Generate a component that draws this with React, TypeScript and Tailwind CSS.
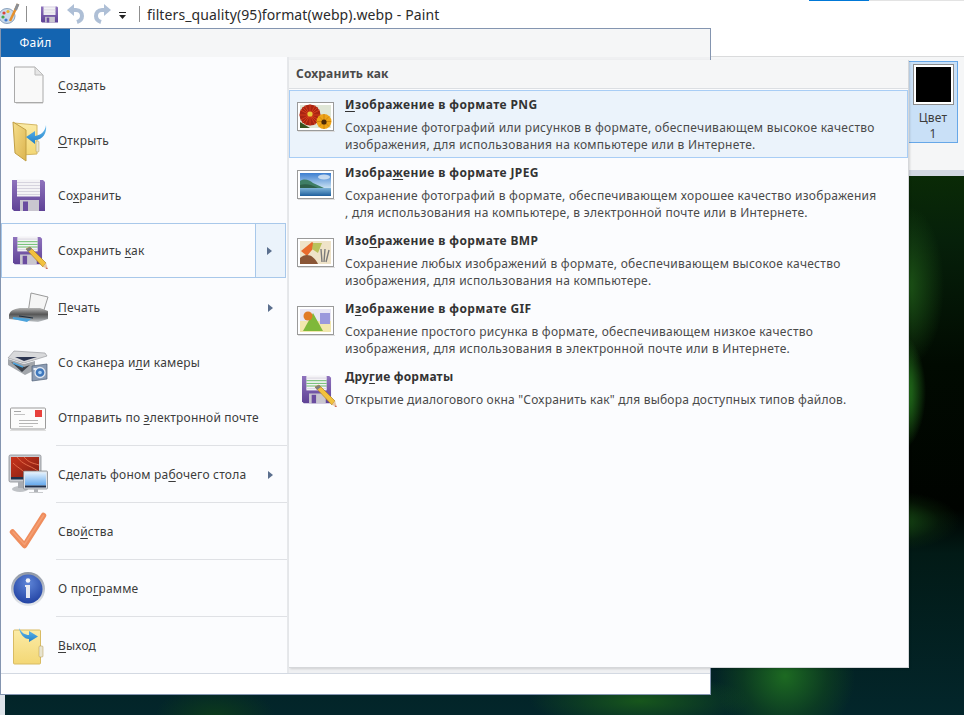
import type { ReactNode } from "react"

const Svg = ({ children, w = 48, h = 48 }: { children: ReactNode; w?: number; h?: number }) => (
  <svg width={w} height={h} viewBox={`0 0 ${w} ${h}`} className="shrink-0">
    {children}
  </svg>
)

const Defs = () => (
  <svg width="0" height="0" className="absolute">
    <defs>
      <linearGradient id="purple" x1="0" y1="0" x2="0" y2="1">
        <stop offset="0" stopColor="#8f73bd" />
        <stop offset="1" stopColor="#5f4296" />
      </linearGradient>
      <linearGradient id="yellow" x1="0" y1="0" x2="0" y2="1">
        <stop offset="0" stopColor="#fbeba6" />
        <stop offset="1" stopColor="#f3d775" />
      </linearGradient>
      <linearGradient id="door" x1="0" y1="0" x2="1" y2="1">
        <stop offset="0" stopColor="#f6df8c" />
        <stop offset="1" stopColor="#dcb44f" />
      </linearGradient>
      <linearGradient id="blueArrow" x1="0" y1="0" x2="0" y2="1">
        <stop offset="0" stopColor="#6cc0f0" />
        <stop offset="1" stopColor="#1f7fc9" />
      </linearGradient>
      <linearGradient id="dark" x1="0" y1="0" x2="0" y2="1">
        <stop offset="0" stopColor="#b4b4b4" />
        <stop offset="0.45" stopColor="#565656" />
        <stop offset="0.7" stopColor="#7d8082" />
        <stop offset="1" stopColor="#c4c8cc" />
      </linearGradient>
      <linearGradient id="red" x1="0" y1="0" x2="1" y2="1">
        <stop offset="0" stopColor="#c9341c" />
        <stop offset="1" stopColor="#7c1c10" />
      </linearGradient>
      <linearGradient id="sky" x1="0" y1="0" x2="0" y2="1">
        <stop offset="0" stopColor="#e2f1fd" />
        <stop offset="1" stopColor="#63a8ec" />
      </linearGradient>
      <linearGradient id="photoSky" x1="0" y1="0" x2="0" y2="1">
        <stop offset="0" stopColor="#3d7fd0" />
        <stop offset="1" stopColor="#c8e0f2" />
      </linearGradient>
      <linearGradient id="water" x1="0" y1="0" x2="0" y2="1">
        <stop offset="0" stopColor="#7fb4d8" />
        <stop offset="1" stopColor="#1f5f9c" />
      </linearGradient>
      <radialGradient id="infoBlue" cx="0.5" cy="0.3" r="0.8">
        <stop offset="0" stopColor="#5f86d8" />
        <stop offset="1" stopColor="#1a3a9c" />
      </radialGradient>
      <linearGradient id="silver" x1="0" y1="0" x2="0" y2="1">
        <stop offset="0" stopColor="#8d95a3" />
        <stop offset="1" stopColor="#e8ebef" />
      </linearGradient>
    </defs>
  </svg>
)

const FloppyShape = ({ green }: { green?: boolean }) => (
  <>
    <path d="M0 1 H31 L33 3 V32 H2 L0 30 Z" fill="url(#purple)" />
    <rect x="5" y="0.5" width="23" height="17" fill="#f4f3f6" />
    {[3, 6, 9, 12, 15].map((y) => (
      <rect key={y} x="5" y={y} width="23" height="1" fill={green && y > 3 && y < 13 ? "#5cb85c" : "#d6d3de"} />
    ))}
    <rect x="8" y="21" width="19" height="11" fill="#c9c6cf" />
    <rect x="11" y="22.5" width="5" height="9.5" fill="#6a4ca0" />
  </>
)

const Pencil = () => (
  <>
    <path d="M0 0 L4 -2 L20 14 L17 18 Z" fill="#f2c13d" stroke="#b58420" strokeWidth="0.7" />
    <path d="M0 0 L4 -2 L6 0 L2 3 Z" fill="#7f7f7f" />
    <path d="M17 18 L20 14 L22 20 Z" fill="#e8c8a8" />
    <path d="M20.5 18.5 L22 20 L19.5 19.6 Z" fill="#c0392b" />
  </>
)

const DocIcon = () => (
  <Svg>
    <path d="M9.5 5 H30 L38 13 V40.5 H9.5 Z" fill="#f9f9f9" stroke="#aaaaaa" />
    <path d="M30 5 V13 H38 Z" fill="#e6e6e6" stroke="#bbbbbb" />
    <rect x="11" y="41" width="27" height="1" fill="#dddddd" />
  </Svg>
)

const FolderIcon = () => (
  <Svg>
    <path d="M9 6 L32 8 V37 L16 38 Z" fill="url(#yellow)" stroke="#d4b765" />
    <path d="M8 5 L21 13 V44 L10 36 Z" fill="url(#door)" stroke="#c19f45" />
    <rect x="31" y="24" width="3" height="11" rx="1" fill="#e8e4cf" stroke="#b49a4c" strokeWidth="0.5" />
    <path d="M41 8 C40 15 36 18 30 19 V14 L21 20 L30 27 V23 C38 23 42 16 41 8 Z" fill="url(#blueArrow)" />
  </Svg>
)

const SaveIcon = () => (
  <Svg>
    <g transform="translate(7 7)">
      <FloppyShape />
    </g>
  </Svg>
)

const SaveAsIcon = () => (
  <Svg>
    <g transform="translate(8 9) scale(0.88)">
      <FloppyShape green />
    </g>
    <g transform="translate(21 22)">
      <Pencil />
    </g>
  </Svg>
)

const PrinterIcon = () => (
  <Svg>
    <path d="M26 9 L43 13 L38 29 H23 Z" fill="#f5f5f5" stroke="#9a9a9a" />
    <path d="M4 31 C5 26 11 24 17 24 H35 L43 27 V35 L33 38 L22 37 L4 35 Z" fill="url(#dark)" />
    <path d="M8 33 L26 35 L22 38 L8 35 Z" fill="#4ba3dc" />
    <path d="M14 32 L28 34" stroke="#1d2c3d" strokeWidth="1.2" />
  </Svg>
)

const ScannerIcon = () => (
  <Svg>
    <path d="M9 12 L40 14 L42 17 L19 24 L3 19 Z" fill="#d8d9db" stroke="#8d8f94" strokeWidth="0.6" />
    <path d="M10 18 L32 18 L19 22 Z" fill="#2c3550" />
    <path d="M3 20 L19 25 L30 22 V31 L20 36 L3 26 Z" fill="#a2a6ab" />
    <path d="M6 23 L19 28 L25 26 L17 33 Z" fill="#3c4048" />
    <path d="M8 24 L18 28" stroke="#4ba3dc" strokeWidth="1.5" />
    <path d="M27 27 L42 25 V40 L27 42 Z" fill="#8b9cb4" stroke="#506076" strokeWidth="0.7" />
    <circle cx="35" cy="33.5" r="5" fill="#3f78bd" stroke="#dfe5ee" strokeWidth="1.3" />
    <circle cx="35" cy="33.5" r="1.8" fill="#a8d0f4" />
    <rect x="28.5" y="29" width="3" height="2" fill="#e9eef3" />
  </Svg>
)

const MailIcon = () => (
  <Svg>
    <rect x="5.5" y="14" width="35" height="21" rx="1" fill="#fcfcfc" stroke="#9b9b9b" />
    <rect x="5" y="36" width="36" height="1" fill="#dedede" />
    <rect x="30" y="16" width="7" height="7" fill="#e8413c" />
    <rect x="9" y="17" width="7" height="1" fill="#a6a6a6" />
    <rect x="9" y="20" width="11" height="1" fill="#c4c4c4" />
    <rect x="14" y="26" width="19" height="1" fill="#b5b5b5" />
    <rect x="14" y="29" width="19" height="1" fill="#b5b5b5" />
    <rect x="14" y="32" width="14" height="1" fill="#c4c4c4" />
  </Svg>
)

const DesktopIcon = () => (
  <Svg>
    <rect x="4" y="4" width="32" height="27" rx="1.5" fill="#c9ccd1" stroke="#7c7f85" strokeWidth="0.7" />
    <rect x="6" y="6" width="28" height="22" fill="url(#red)" />
    <path d="M12 6 C18 14 24 14 33 20 M19 6 C24 12 28 12 34 14 M8 12 C14 18 18 18 24 27" stroke="#e26a48" fill="none" />
    <rect x="6" y="26" width="28" height="2.5" fill="#20304a" />
    <ellipse cx="15" cy="38" rx="8" ry="3" fill="#bfc2c6" />
    <rect x="13" y="31" width="5" height="6" fill="#a9acb1" />
    <rect x="18.5" y="20" width="24" height="18" rx="1" fill="#dfe3e8" stroke="#777b80" strokeWidth="0.7" />
    <rect x="20" y="21.5" width="21" height="13" fill="url(#sky)" />
    <rect x="20" y="34.5" width="21" height="2" fill="#20304a" />
    <rect x="29" y="38" width="4" height="3" fill="#b0b3b8" />
    <rect x="24" y="41" width="14" height="1" fill="#c8cacd" />
  </Svg>
)

const CheckIcon = () => (
  <Svg>
    <path d="M7.5 24 L19.5 37.5 L38.5 7.5" fill="none" stroke="#ef8d5d" strokeWidth="5.5" strokeLinecap="round" strokeLinejoin="round" />
    <path d="M8 24 L19.5 36.5 L38.5 7.5" fill="none" stroke="#f6a67e" strokeWidth="1.5" strokeLinecap="round" strokeLinejoin="round" opacity="0.7" />
  </Svg>
)

const InfoIcon = () => (
  <Svg>
    <circle cx="23" cy="24" r="17" fill="url(#silver)" />
    <circle cx="23" cy="24" r="14.5" fill="url(#infoBlue)" />
    <circle cx="23" cy="15.5" r="2.3" fill="#f2f4fa" />
    <path d="M20 20 H25 V33 H21 V22 H20 Z" fill="#e7eaf3" />
  </Svg>
)

const ExitIcon = () => (
  <Svg>
    <rect x="8.5" y="8" width="27" height="34" rx="1" fill="url(#yellow)" stroke="#d8bb63" />
    <rect x="34" y="24" width="4" height="11" rx="1" fill="#e8e4cf" stroke="#b49a4c" strokeWidth="0.5" />
    <path d="M14 6 C17 11 20 13 24 13 V9 L33 14.5 L24 20 V17 C19 17 15 12 14 6 Z" fill="url(#blueArrow)" />
  </Svg>
)

const Frame = ({ children }: { children: ReactNode }) => (
  <svg width="38" height="30" viewBox="0 0 38 30" className="shrink-0">
    <rect x="0.5" y="0.5" width="36" height="28" fill="#ffffff" stroke="#9a9a9a" />
    <rect x="1" y="29" width="37" height="1" fill="#dddddd" />
    <g transform="translate(3 3)">{children}</g>
  </svg>
)

const PngThumb = () => (
  <Frame>
    <rect width="31" height="23" fill="#dfe6d6" />
    <path d="M0 17 L10 23 H0 Z" fill="#37521e" />
    <circle cx="10" cy="10" r="10.5" fill="#a92412" />
    <path d="M10 -0.5 V20.5 M-0.5 10 H20.5 M2.5 2.5 L17.5 17.5 M17.5 2.5 L2.5 17.5 M5 0.5 L15 19.5 M15 0.5 L5 19.5 M0.5 5 L19.5 15 M19.5 5 L0.5 15" stroke="#d93f1c" strokeWidth="0.9" />
    <circle cx="10" cy="9" r="2.6" fill="#e8c93a" />
    <circle cx="24" cy="16.5" r="7.5" fill="#eea417" />
    <path d="M24 9 V24 M16.5 16.5 H31 M19 11.5 L29 21.5 M29 11.5 L19 21.5" stroke="#c97f0c" strokeWidth="0.8" />
    <circle cx="24" cy="17" r="2.6" fill="#4d2a08" />
  </Frame>
)

const JpegThumb = () => (
  <Frame>
    <rect width="31" height="15" fill="url(#photoSky)" />
    <ellipse cx="24" cy="4" rx="6" ry="2.5" fill="#dfeaf5" opacity="0.8" />
    <path d="M0 8 C5 5 9 7 13 10 L24 15 H0 Z" fill="#3f7e66" />
    <path d="M0 12 C6 10 12 12 18 15 H0 Z" fill="#2e5f4a" />
    <rect y="15" width="31" height="8" fill="url(#water)" />
  </Frame>
)

const BmpThumb = () => (
  <Frame>
    <rect width="31" height="23" fill="#efe3c8" />
    <path d="M1 10 L12 1 L16 4 L7 15 Z" fill="#e86b2c" />
    <path d="M13 2 H22 L18 12 L12 8 Z" fill="#b9c25a" />
    <path d="M0 17 C6 11 14 14 18 23 H0 Z" fill="#8a5636" />
    <path d="M21 8 L22 21 M25 8 L24 21 M29 9 L26 21" stroke="#7a7a7a" strokeWidth="1.4" />
  </Frame>
)

const GifThumb = () => (
  <Frame>
    <rect width="31" height="23" fill="#f2e7ad" />
    <rect width="31" height="12" fill="#e8e6f4" />
    <rect x="20" y="4" width="10" height="11" fill="#9a98dc" />
    <path d="M13 4 L23 22 H3 Z" fill="#7fb83a" />
    <circle cx="8" cy="7" r="4.5" fill="#e07b28" />
  </Frame>
)

const MoreIcon = () => (
  <svg width="38" height="36" viewBox="0 0 38 36" className="shrink-0">
    <g transform="translate(1 1) scale(0.88)">
      <FloppyShape green />
    </g>
    <g transform="translate(14 13)">
      <Pencil />
    </g>
  </svg>
)

const Arrow = () => (
  <svg width="5" height="8" viewBox="0 0 5 8">
    <path d="M0 0 L5 4 L0 8 Z" fill="#5b6f8e" />
  </svg>
)

const leftItems = [
  { Icon: DocIcon, pre: "", key: "С", post: "оздать", h: "h-[55px]" },
  { Icon: FolderIcon, pre: "", key: "О", post: "ткрыть", h: "h-[55px]" },
  { Icon: SaveIcon, pre: "Со", key: "х", post: "ранить", h: "h-[55px]" },
  { Icon: SaveAsIcon, pre: "Сохранить ", key: "к", post: "ак", h: "h-[55px] mr-[1px]", active: true },
  { Icon: PrinterIcon, pre: "", key: "П", post: "ечать", h: "h-[55px]", arrow: true, top: "mt-[2px]" },
  { Icon: ScannerIcon, pre: "Со сканера и", key: "л", post: "и камеры", h: "h-[55px]" },
  { Icon: MailIcon, pre: "Отправить по ", key: "э", post: "лектронной почте", h: "h-[55px]", sep: true },
  { Icon: DesktopIcon, pre: "Сделать фоном ра", key: "б", post: "очего стола", h: "h-[56px] pt-px", arrow: true, sep: true },
  { Icon: CheckIcon, pre: "Сво", key: "й", post: "ства", h: "h-[56px] pt-px", sep: true },
  { Icon: InfoIcon, pre: "О про", key: "г", post: "рамме", h: "h-[56px] pt-px", sep: true },
  { Icon: ExitIcon, pre: "", key: "В", post: "ыход", h: "h-[56px] pt-px" },
]

const formats = [
  {
    Thumb: PngThumb,
    pre: "",
    key: "И",
    post: "зображение в формате PNG",
    lines: [
      "Сохранение фотографий или рисунков в формате, обеспечивающем высокое качество",
      "изображения, для использования на компьютере или в Интернете.",
    ],
    active: true,
  },
  {
    Thumb: JpegThumb,
    pre: "Изобра",
    key: "ж",
    post: "ение в формате JPEG",
    lines: [
      "Сохранение фотографий в формате, обеспечивающем хорошее качество изображения",
      ", для использования на компьютере, в электронной почте или в Интернете.",
    ],
  },
  {
    Thumb: BmpThumb,
    pre: "Изо",
    key: "б",
    post: "ражение в формате BMP",
    lines: [
      "Сохранение любых изображений в формате, обеспечивающем высокое качество",
      "изображения, для использования на компьютере.",
    ],
  },
  {
    Thumb: GifThumb,
    pre: "И",
    key: "з",
    post: "ображение в формате GIF",
    lines: [
      "Сохранение простого рисунка в формате, обеспечивающем низкое качество",
      "изображения, для использования в электронной почте или в Интернете.",
    ],
  },
]

const TitleBar = () => (
  <div className="flex h-[28px] items-center bg-white">
    <svg width="20" height="22" viewBox="0 0 20 22" className="shrink-0">
      <ellipse cx="7" cy="13" rx="8" ry="7.5" fill="#c9d9ea" stroke="#8ca3bd" />
      <circle cx="4" cy="10" r="1.6" fill="#d9443a" />
      <circle cx="8" cy="8.5" r="1.6" fill="#e9b42e" />
      <circle cx="3" cy="14" r="1.6" fill="#4aa84a" />
      <circle cx="6" cy="17" r="1.6" fill="#3d78cf" />
      <path d="M18 1 L10 18" stroke="#e5902d" strokeWidth="2.5" />
      <path d="M18 1 L15.5 7" stroke="#8a8f96" strokeWidth="3" />
    </svg>
    <div className="ml-[6px] h-[16px] w-px bg-[#8f8f8f]" />
    <svg width="17" height="17" viewBox="0 0 33 33" className="ml-[14px] shrink-0">
      <FloppyShape />
    </svg>
    <svg width="18" height="20" viewBox="0 0 18 20" className="ml-[9px] shrink-0">
      <path d="M3 6 H9 C13 6 15 9 15 12 C15 15 13 17 10 18" fill="none" stroke="#aebfd6" strokeWidth="4" />
      <path d="M0 6 L7 0 V12 Z" fill="#aebfd6" />
    </svg>
    <svg width="18" height="20" viewBox="0 0 18 20" className="ml-[8px] shrink-0">
      <path d="M15 6 H9 C5 6 3 9 3 12 C3 15 5 17 8 18" fill="none" stroke="#aebfd6" strokeWidth="4" />
      <path d="M18 6 L11 0 V12 Z" fill="#aebfd6" />
    </svg>
    <svg width="9" height="8" viewBox="0 0 9 8" className="ml-[7px] mt-[3px] shrink-0">
      <rect x="1" y="0" width="7" height="1" fill="#222222" />
      <path d="M1 3 H8 L4.5 7 Z" fill="#222222" />
    </svg>
    <div className="ml-[12px] h-[16px] w-px bg-[#8f8f8f]" />
    <span className="ml-[7px] text-[14px] tracking-[0.11px] text-[#2b2b2b]">filters_quality(95)format(webp).webp - Paint</span>
    <div className="ml-auto flex self-start">
      <div className="h-px w-[60px] bg-[#0078d7]" />
      <div className="h-px w-[95px] bg-[#e3e3e3]" />
    </div>
  </div>
)

const Ribbon = () => (
  <>
    <div className="h-[29px] border-b border-[#dadbdc] bg-white" />
    <div className="flex h-[113px] justify-end bg-[#f5f6f7] pr-[6px] pt-[4px]">
      <div className="flex h-[82px] w-[50px] flex-col items-center border border-[#66a7e8] bg-[#c9e0f7] pt-[2px]">
        <div className="h-[41px] w-[41px] border border-[#8c8c8c] bg-white p-[2px]">
          <div className="h-full w-full bg-black" />
        </div>
        <div className="mt-[5px] text-center text-[12px] leading-[16px] tracking-[0.2px] text-[#3c3c3c]">
          Цвет
          <br />1
        </div>
      </div>
    </div>
    <div className="h-[6px] bg-[#d3d8e2]" />
  </>
)

const Canvas = () => (
  <div className="flex-1 bg-[radial-gradient(ellipse_28px_60px_at_898px_216px,#2b7d1f_0%,#1f6419_45%,transparent_100%),radial-gradient(ellipse_70px_30px_at_890px_345px,#1a5316_0%,#13421240_70%,transparent_100%),radial-gradient(ellipse_36px_80px_at_908px_110px,#1c5216_0%,transparent_100%),radial-gradient(ellipse_70px_70px_at_785px_500px,#1d6a22_0%,#14501c80_60%,transparent_100%),radial-gradient(ellipse_110px_28px_at_640px_525px,#17561c_0%,transparent_100%),radial-gradient(ellipse_60px_30px_at_215px_540px,#0c3a1c_0%,transparent_100%),linear-gradient(180deg,#0a2a06_0%,#06200a_12%,#010a01_35%,#000300_62%,#021a16_70%,#03262b_100%)]">
    <div className="h-full w-[5px] bg-[#dfe4ea]" />
  </div>
)

const FileMenu = () => (
  <div className="absolute left-0 top-[28px] h-[667px] w-[711px] border border-[#8495b0] bg-white">
    <div className="flex h-[28px] bg-[#f5f6f7]">
      <div className="flex w-[69px] items-center justify-center bg-[#1464b0] text-[12px] tracking-[0.2px] text-white">Файл</div>
    </div>
    <div className="flex h-[617px] border-b border-[#d3d9e2] bg-[#eff0f2]">
      <div className="w-[288px] shrink-0 border-r-2 border-[#e6e8eb] bg-[#fbfcfe] pt-px">
        {leftItems.map(({ Icon, pre, key, post, h, active, arrow, sep, top }) => (
          <div key={pre + key + post}>
            <div className={`flex items-center ${h} ${top ?? ""} ${active ? "border border-[#a8c8ea]" : ""}`}>
              <div className={`flex items-center ${active ? "ml-[3px]" : "ml-[4px]"}`}>
                <Icon />
              </div>
              <span className="ml-[5px] whitespace-pre text-[12px] tracking-[0.2px] text-[#3c3c3c]">
                {pre}
                <u className="underline-offset-2">{key}</u>
                {post}
              </span>
              {active && (
                <div className="ml-auto flex h-full w-[30px] items-center justify-center border-l border-[#a8c8ea] bg-[#ebf3fb] pr-[2px]">
                  <Arrow />
                </div>
              )}
              {arrow && (
                <div className="ml-auto mr-[14px] flex items-center">
                  <Arrow />
                </div>
              )}
            </div>
            {sep && <div className="ml-[55px] h-px bg-[#dfe1e5]" />}
          </div>
        ))}
      </div>
      <div className="relative z-10 mt-[3px] h-[608px] w-[620px] shrink-0 self-start border-b border-r border-[#d5d7da] bg-[#fbfcfe] shadow-[1px_1px_2px_#00000022]">
        <div className="flex h-[29px] items-center border-b border-[#dcdfe3] bg-[#f5f6f7] pl-[7px] text-[12px] font-bold tracking-[0.15px] text-[#4a4a4a]">
          Сохранить как
        </div>
        <div className="pt-px">
          {formats.map(({ Thumb, pre, key, post, lines, active }) => (
            <div
              key={post}
              className={`flex h-[68px] ${
                active ? "border border-[#a8cdf5] bg-[#ebf3fb]" : "border border-transparent"
              }`}
            >
              <div className="ml-[7px] mt-[11px]">
                <Thumb />
              </div>
              <div className="ml-[10px] pt-[6px]">
                <div className="text-[12px] font-bold leading-[16px] tracking-[0.4px] text-[#333333]">
                  {pre}
                  <u className="underline-offset-2">{key}</u>
                  {post}
                </div>
                <div className="mt-[6px] text-[12px] leading-[17px] tracking-[0.27px] text-[#4a4a4a]">
                  {lines.map((l) => (
                    <div key={l} className="whitespace-pre">
                      {l}
                    </div>
                  ))}
                </div>
              </div>
            </div>
          ))}
          <div className="flex h-[50px] border border-transparent">
            <div className="ml-[11px] mt-[11px]">
              <MoreIcon />
            </div>
            <div className="ml-[6px] pt-[6px]">
              <div className="text-[12px] font-bold leading-[16px] tracking-[0.2px] text-[#333333]">
                Дру<u className="underline-offset-2">г</u>ие форматы
              </div>
              <div className="mt-[6px] whitespace-pre text-[12px] leading-[17px] tracking-[0.2px] text-[#4a4a4a]">
                Открытие диалогового окна "Сохранить как" для выбора доступных типов файлов.
              </div>
            </div>
          </div>
        </div>
      </div>
    </div>
  </div>
)

export default function App() {
  return (
    <div className="relative flex h-[715px] w-[964px] flex-col overflow-hidden bg-white font-['Noto_Sans','Open_Sans',sans-serif]">
      <Defs />
      <TitleBar />
      <Ribbon />
      <Canvas />
      <FileMenu />
    </div>
  )
}
